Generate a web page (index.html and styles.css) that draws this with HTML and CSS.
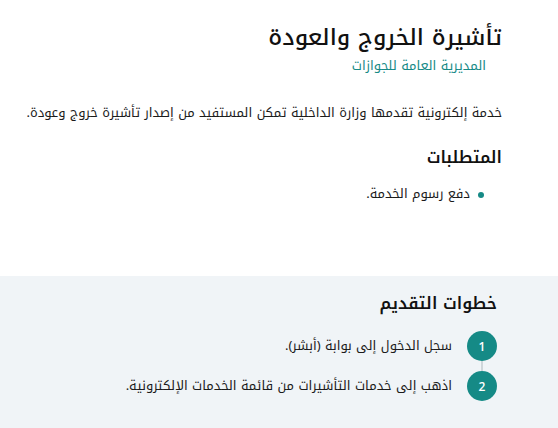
FILE: index.html
```html
<!DOCTYPE html>
<html lang="ar" dir="rtl">
<head>
<meta charset="utf-8">
<link rel="stylesheet" href="styles.css">
</head>
<body>
<main class="page">
  <section class="intro">
    <header class="head">
      <h1 class="title">تأشيرة الخروج والعودة</h1>
      <p class="agency">المديرية العامة للجوازات</p>
    </header>
    <p class="desc">خدمة إلكترونية تقدمها وزارة الداخلية تمكن المستفيد من إصدار تأشيرة خروج وعودة.</p>
    <h2 class="sub">المتطلبات</h2>
    <ul class="reqs">
      <li>دفع رسوم الخدمة.</li>
    </ul>
  </section>
  <section class="steps">
    <h2 class="steps-title">خطوات التقديم</h2>
    <ol class="step-list">
      <li class="step"><span class="num">1</span><span class="txt">سجل الدخول إلى بوابة (أبشر).</span></li>
      <li class="step"><span class="num">2</span><span class="txt">اذهب إلى خدمات التأشيرات من قائمة الخدمات الإلكترونية.</span></li>
    </ol>
  </section>
</main>
</body>
</html>
```
FILE: styles.css
```css
* { box-sizing: border-box; }
html, body { margin: 0; padding: 0; }
body {
  font-family: "Noto Kufi Arabic", "Noto Sans", sans-serif;
  color: #1b1b1b;
  background: #fff;
  width: 558px;
  height: 428px;
  overflow: hidden;
}
.page { display: flex; flex-direction: column; height: 100%; }
.intro { padding: 20px 56px 0 12px; height: 276px; }
.head { display: flex; flex-direction: column; }
.title { margin: 0; font-size: 23px; font-weight: 500; line-height: 35px; color: #111; }
.agency { margin: 3px 16px 0 0; font-size: 13px; color: #168a86; line-height: 16px; }
.desc { margin: 28px 0 0; font-size: 13px; line-height: 22px; }
.sub { margin: 20px 0 0; font-size: 16.5px; font-weight: 600; line-height: 28px; color: #111; }
.reqs { margin: 12px 0 0; padding: 0 32px 0 0; list-style: none; }
.reqs li { position: relative; font-size: 13px; line-height: 20px; }
.reqs li::before {
  content: ""; position: absolute; right: -14px; top: 8px;
  width: 6px; height: 6px; border-radius: 50%; background: #168a86;
}
.steps { flex: 1; background: #f0f4f7; padding: 14px 61px 0 60px; }
.steps-title { margin: 0; font-size: 16.5px; font-weight: 600; line-height: 28px; color: #111; }
.step-list { list-style: none; margin: 13px 0 0; padding: 0; display: flex; flex-direction: column; gap: 10px; position: relative; }
.step { display: flex; align-items: center; gap: 15px; position: relative; }
.step:not(:last-child)::after {
  content: ""; position: absolute; right: 14px; top: 30px; width: 2px; height: 10px; background: #cfd6da;
}
.num {
  width: 30px; height: 30px; border-radius: 50%; background: #158a86; color: #fff;
  display: flex; align-items: center; justify-content: center; font-size: 12px; font-weight: 600; flex: none;
  font-family: "Open Sans", sans-serif;
}
.txt { font-size: 13px; line-height: 20px; }
```
